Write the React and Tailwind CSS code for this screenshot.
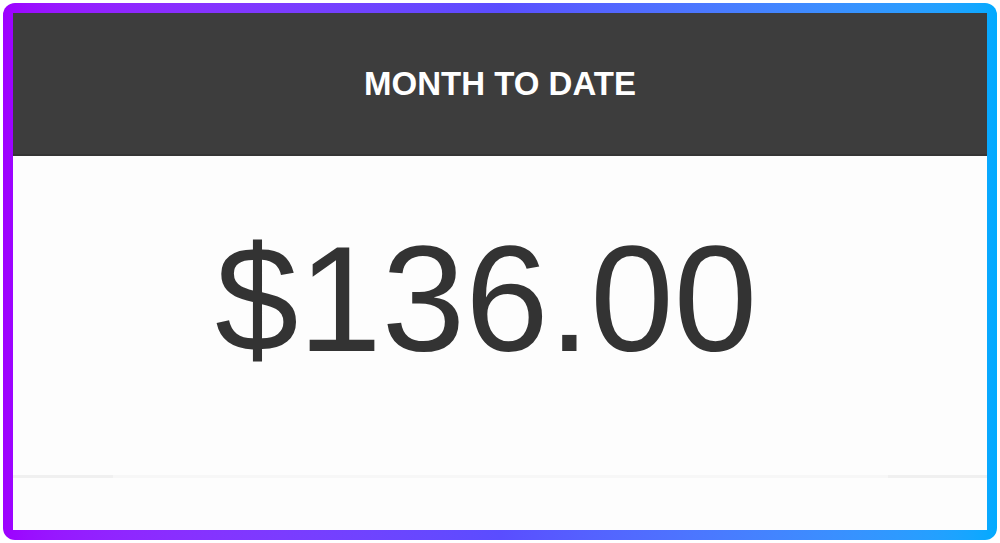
export default function App() {
  return (
    <div className="h-[543px] w-[1000px] bg-white p-[3px]" style={{ fontFamily: '"Liberation Sans", Arial, sans-serif' }}>
      {/* Gradient frame */}
      <div className="h-full w-full rounded-[12px] bg-gradient-to-r from-[#9d00ff] via-[#5a4dff] to-[#00aaff] p-[10px]">
        <div className="flex h-full w-full flex-col bg-[#fdfdfd]">
          {/* Header */}
          <div className="flex h-[143px] items-center justify-center border-b-2 border-[#353535] bg-[#3d3d3d]">
            <h2 className="text-[33px] font-bold leading-none text-white">MONTH TO DATE</h2>
          </div>

          {/* Amount */}
          <div className="h-[319px] pt-[68px] pr-[28px] text-center">
            <div className="text-[150px] leading-none text-[#333333]">$136.00</div>
          </div>

          {/* Row divider */}
          <div className="flex h-[3px]">
            <div className="w-[100px] bg-[#f0f0f0]" />
            <div className="flex-1 bg-[#f7f7f7]" />
            <div className="w-[99px] bg-[#f0f0f0]" />
          </div>
          <div className="flex-1" />
        </div>
      </div>
    </div>
  );
}
